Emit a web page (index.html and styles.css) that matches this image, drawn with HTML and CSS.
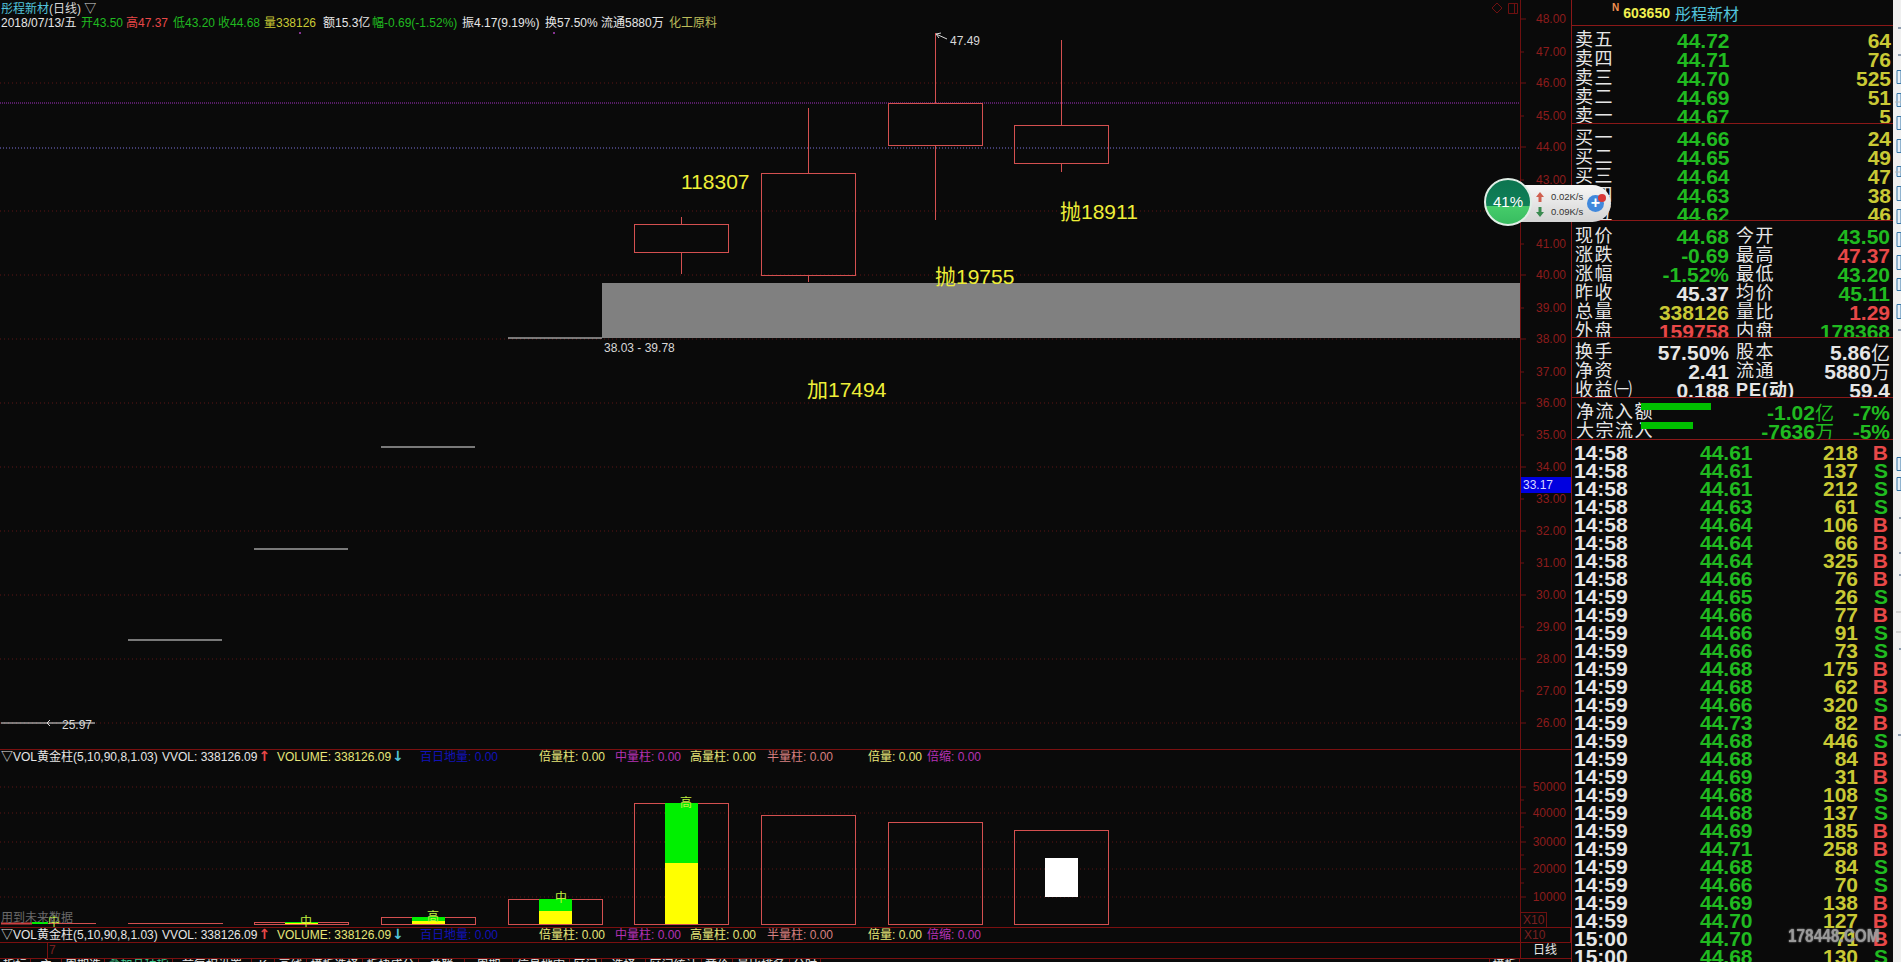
FILE: index.html
```html
<!DOCTYPE html>
<html lang="zh-CN">
<head>
    <meta charset="UTF-8">
    <title>彤程新材(日线)</title>
    <link rel="stylesheet" href="styles.css">
</head>
<body>
<div class="app">
    <section class="chart">
        <div class="pane pane-main">
            <svg class="canvas" viewBox="0 0 1571 749" width="1571" height="749">
                <!-- grid -->
                <path class="grid" d="M0 83H1520M0 211H1520M0 275H1520M0 339H1520M0 403H1520M0 467H1520M0 531H1520M0 595H1520M0 659H1520M0 723H1520"/>
                <path class="line-purple" d="M0 103H1520"/>
                <path class="line-blue" d="M0 148H1520"/>
                <!-- axis -->
                <path class="axis" d="M1520.5 0V749M1520 19h6M1520 52h4M1520 83h6M1520 116h4M1520 147h6M1520 180h4M1520 211h6M1520 244h4M1520 275h6M1520 308h4M1520 339h6M1520 372h4M1520 403h6M1520 435h4M1520 467h6M1520 499h4M1520 531h6M1520 563h4M1520 595h6M1520 627h4M1520 659h6M1520 691h4M1520 723h6"/>
                <g class="axis-label">
                    <text x="1566" y="23">48.00</text>
                    <text x="1566" y="56">47.00</text>
                    <text x="1566" y="87">46.00</text>
                    <text x="1566" y="120">45.00</text>
                    <text x="1566" y="151">44.00</text>
                    <text x="1566" y="184">43.00</text>
                    <text x="1566" y="248">41.00</text>
                    <text x="1566" y="279">40.00</text>
                    <text x="1566" y="312">39.00</text>
                    <text x="1566" y="343">38.00</text>
                    <text x="1566" y="376">37.00</text>
                    <text x="1566" y="407">36.00</text>
                    <text x="1566" y="439">35.00</text>
                    <text x="1566" y="471">34.00</text>
                    <text x="1566" y="503">33.00</text>
                    <text x="1566" y="535">32.00</text>
                    <text x="1566" y="567">31.00</text>
                    <text x="1566" y="599">30.00</text>
                    <text x="1566" y="631">29.00</text>
                    <text x="1566" y="663">28.00</text>
                    <text x="1566" y="695">27.00</text>
                    <text x="1566" y="727">26.00</text>
                </g>
                <rect class="tag" x="1521" y="477" width="50" height="16"/>
                <text class="tag-text" x="1523" y="489">33.17</text>
                <path class="corner" d="M1497 3l5 5-5 5-5-5zM1508.5 3.5h9v10h-9zM1514.5 3.5v10"/>
                <circle class="dot" cx="300" cy="33" r="1"/>
                <circle class="dot" cx="554" cy="33" r="1"/>

                <!-- gray band and old price levels -->
                <rect class="band" x="602" y="283" width="918" height="55"/>
                <path class="level" d="M1 723H95M128 640H222M254 549H348M381 447H475M508 338H602"/>
                <text class="small" x="62" y="729">25.97</text>
                <path class="level-arrow" d="M50 720l-3 3 3 3"/>
                <text class="small" x="604" y="352">38.03 - 39.78</text>

                <!-- candles -->
                <g class="candle">
                    <path d="M681.5 217V224M681.5 252V274"/>
                    <rect x="634.5" y="224.5" width="94" height="28"/>
                    <path d="M808.5 108V173M808.5 276V282"/>
                    <rect x="761.5" y="173.5" width="94" height="102"/>
                    <path d="M935.5 33V103M935.5 146V220"/>
                    <rect x="888.5" y="103.5" width="94" height="42"/>
                    <path d="M1061.5 40V125M1061.5 164V172"/>
                    <rect x="1014.5" y="125.5" width="94" height="38"/>
                </g>
                <path class="level-arrow" d="M947 39l-11-5M936 34l3 4M936 34l5-1"/>
                <text class="small" x="950" y="45">47.49</text>
                <g class="note">
                    <text x="681" y="189">118307</text>
                    <text x="1060" y="219">抛18911</text>
                    <text x="935" y="284">抛19755</text>
                    <text x="807" y="397">加17494</text>
                </g>
            </svg>
            <div class="title"><span class="c-cyan">彤程新材</span>(日线) ▽</div>
            <div class="stats">
                <span>2018/07/13/五</span>
                <span class="c-green">开43.50</span>
                <span class="c-red">高47.37</span>
                <span class="c-green">低43.20</span>
                <span class="c-green">收44.68</span>
                <span class="c-yellow">量338126</span>
                <span>额15.3亿</span>
                <span class="c-green">幅-0.69(-1.52%)</span>
                <span>振4.17(9.19%)</span>
                <span>换57.50%</span>
                <span>流通5880万</span>
                <span class="c-olive">化工原料</span>
            </div>
        </div>

        <div class="pane pane-vol">
            <svg class="canvas" viewBox="0 750 1571 177" width="1571" height="177">
                <path class="grid" d="M0 787H1520M0 813H1520M0 842H1520M0 869H1520M0 897H1520"/>
                <path class="axis" d="M1520.5 750V927M1520 787h6M1520 800h4M1520 813h6M1520 827h4M1520 842h6M1520 855h4M1520 869h6M1520 883h4M1520 897h6"/>
                <g class="axis-label">
                    <text x="1566" y="791">50000</text>
                    <text x="1566" y="817">40000</text>
                    <text x="1566" y="846">30000</text>
                    <text x="1566" y="873">20000</text>
                    <text x="1566" y="901">10000</text>
                </g>
                <rect class="x10" x="1520.5" y="912.5" width="26" height="15"/>
                <text class="x10-text" x="1523" y="924">X10</text>

                <path class="vol-red" d="M1 923.5H32"/>
                <g class="vol">
                    <path d="M32 923.5H96M128 923.5H223"/>
                    <rect x="254.5" y="922.5" width="94" height="2"/>
                    <rect x="381.5" y="917.5" width="94" height="7"/>
                    <rect x="508.5" y="899.5" width="94" height="25"/>
                    <rect x="634.5" y="803.5" width="94" height="121"/>
                    <rect x="761.5" y="815.5" width="94" height="109"/>
                    <rect x="888.5" y="822.5" width="94" height="102"/>
                    <rect x="1014.5" y="830.5" width="94" height="94"/>
                </g>
                <rect class="f-green" x="32" y="922" width="16" height="2"/>
                <rect class="f-green" x="285" y="922" width="33" height="1"/>
                <rect class="f-yellow" x="285" y="923" width="33" height="1"/>
                <rect class="f-green" x="412" y="917" width="33" height="4"/>
                <rect class="f-yellow" x="412" y="921" width="33" height="3"/>
                <rect class="f-green" x="539" y="899" width="33" height="12"/>
                <rect class="f-yellow" x="539" y="911" width="33" height="13"/>
                <rect class="f-green" x="665" y="803" width="33" height="60"/>
                <rect class="f-yellow" x="665" y="863" width="33" height="61"/>
                <rect class="f-white" x="1045" y="858" width="33" height="39"/>
                <g class="mark">
                    <text x="54" y="926">中</text>
                    <text x="306" y="926">中</text>
                    <text x="433" y="921">高</text>
                    <text x="561" y="902">中</text>
                    <text x="686" y="807">高</text>
                </g>
                <text class="future" x="1" y="922">用到未来数据</text>
            </svg>
            <div class="vol-head">
                <span>▽VOL黄金柱(5,10,90,8,1.03)</span>
                <span>VVOL: 338126.09<b class="c-red">↑</b></span>
                <span class="c-pale">VOLUME: 338126.09<b class="c-cyan">↓</b></span>
                <span class="c-blue">百日地量: 0.00</span>
                <span class="c-pale">倍量柱: 0.00</span>
                <span class="c-magenta">中量柱: 0.00</span>
                <span class="c-pale">高量柱: 0.00</span>
                <span class="c-salmon">半量柱: 0.00</span>
                <span class="c-pale">倍量: 0.00</span>
                <span class="c-magenta">倍缩: 0.00</span>
            </div>
        </div>

        <div class="pane pane-vol2">
            <div class="vol-head">
                <span>▽VOL黄金柱(5,10,90,8,1.03)</span>
                <span>VVOL: 338126.09<b class="c-red">↑</b></span>
                <span class="c-pale">VOLUME: 338126.09<b class="c-cyan">↓</b></span>
                <span class="c-blue">百日地量: 0.00</span>
                <span class="c-pale">倍量柱: 0.00</span>
                <span class="c-magenta">中量柱: 0.00</span>
                <span class="c-pale">高量柱: 0.00</span>
                <span class="c-salmon">半量柱: 0.00</span>
                <span class="c-pale">倍量: 0.00</span>
                <span class="c-magenta">倍缩: 0.00</span>
            </div>
            <div class="x10-box">X10</div>
        </div>

        <div class="pane pane-date">
            <div class="month">7</div>
            <div class="period">日线</div>
        </div>

        <div class="tabs">
            <span>指标</span><span>主</span><span>周期选</span><span class="c-tab">叠加品种指</span><span>前复权设置</span><span>K</span><span>画线</span><span>模板选择</span><span>板块成分</span><span>关联</span><span>周期</span><span>信息地雷</span><span>区间</span><span>选择</span><span>区间统计</span><span>竞价</span><span>量比排名</span><span>分时</span><span class="tab-gap"></span><span>模板</span>
        </div>
    </section>

    <aside class="quote">
        <header class="q-head">
            <sup>N</sup><strong>603650</strong><em>彤程新材</em>
        </header>

        <div class="book book-sell">
            <div class="b-row"><label>卖五</label><span class="c-green">44.72</span><span class="c-yellow">64</span></div>
            <div class="b-row"><label>卖四</label><span class="c-green">44.71</span><span class="c-yellow">76</span></div>
            <div class="b-row"><label>卖三</label><span class="c-green">44.70</span><span class="c-yellow">525</span></div>
            <div class="b-row"><label>卖二</label><span class="c-green">44.69</span><span class="c-yellow">51</span></div>
            <div class="b-row"><label>卖一</label><span class="c-green">44.67</span><span class="c-yellow">5</span></div>
        </div>
        <div class="book book-buy">
            <div class="b-row"><label>买一</label><span class="c-green">44.66</span><span class="c-yellow">24</span></div>
            <div class="b-row"><label>买二</label><span class="c-green">44.65</span><span class="c-yellow">49</span></div>
            <div class="b-row"><label>买三</label><span class="c-green">44.64</span><span class="c-yellow">47</span></div>
            <div class="b-row"><label>买四</label><span class="c-green">44.63</span><span class="c-yellow">38</span></div>
            <div class="b-row"><label>买五</label><span class="c-green">44.62</span><span class="c-yellow">46</span></div>
        </div>

        <div class="detail detail-a">
            <label>现价</label><span class="c-green">44.68</span><label>今开</label><span class="c-green">43.50</span>
            <label>涨跌</label><span class="c-green">-0.69</span><label>最高</label><span class="c-red">47.37</span>
            <label>涨幅</label><span class="c-green">-1.52%</span><label>最低</label><span class="c-green">43.20</span>
            <label>昨收</label><span>45.37</span><label>均价</label><span class="c-green">45.11</span>
            <label>总量</label><span class="c-yellow">338126</span><label>量比</label><span class="c-red">1.29</span>
            <label>外盘</label><span class="c-red">159758</span><label>内盘</label><span class="c-green">178368</span>
        </div>
        <div class="detail detail-b">
            <label>换手</label><span>57.50%</span><label>股本</label><span>5.86<i class="unit">亿</i></span>
            <label>净资</label><span>2.41</span><label>流通</label><span>5880<i class="unit">万</i></span>
            <label>收益㈠</label><span>0.188</span><label class="pe">PE(动)</label><span>59.4</span>
        </div>
        <div class="flow">
            <div class="f-row"><label>净流入额</label><i class="f-bar f-bar-a"></i><span class="c-green f-val">-1.02<i class="unit">亿</i></span><span class="c-green f-pct">-7%</span></div>
            <div class="f-row"><label>大宗流入</label><i class="f-bar f-bar-b"></i><span class="c-green f-val">-7636<i class="unit">万</i></span><span class="c-green f-pct">-5%</span></div>
        </div>

        <div class="trades">
            <div class="t-row"><span>14:58</span><span class="c-green">44.61</span><span class="c-yellow">218</span><span class="c-red">B</span></div>
            <div class="t-row"><span>14:58</span><span class="c-green">44.61</span><span class="c-yellow">137</span><span class="c-green">S</span></div>
            <div class="t-row"><span>14:58</span><span class="c-green">44.61</span><span class="c-yellow">212</span><span class="c-green">S</span></div>
            <div class="t-row"><span>14:58</span><span class="c-green">44.63</span><span class="c-yellow">61</span><span class="c-green">S</span></div>
            <div class="t-row"><span>14:58</span><span class="c-green">44.64</span><span class="c-yellow">106</span><span class="c-red">B</span></div>
            <div class="t-row"><span>14:58</span><span class="c-green">44.64</span><span class="c-yellow">66</span><span class="c-red">B</span></div>
            <div class="t-row"><span>14:58</span><span class="c-green">44.64</span><span class="c-yellow">325</span><span class="c-red">B</span></div>
            <div class="t-row"><span>14:58</span><span class="c-green">44.66</span><span class="c-yellow">76</span><span class="c-red">B</span></div>
            <div class="t-row"><span>14:59</span><span class="c-green">44.65</span><span class="c-yellow">26</span><span class="c-green">S</span></div>
            <div class="t-row"><span>14:59</span><span class="c-green">44.66</span><span class="c-yellow">77</span><span class="c-red">B</span></div>
            <div class="t-row"><span>14:59</span><span class="c-green">44.66</span><span class="c-yellow">91</span><span class="c-green">S</span></div>
            <div class="t-row"><span>14:59</span><span class="c-green">44.66</span><span class="c-yellow">73</span><span class="c-green">S</span></div>
            <div class="t-row"><span>14:59</span><span class="c-green">44.68</span><span class="c-yellow">175</span><span class="c-red">B</span></div>
            <div class="t-row"><span>14:59</span><span class="c-green">44.68</span><span class="c-yellow">62</span><span class="c-red">B</span></div>
            <div class="t-row"><span>14:59</span><span class="c-green">44.66</span><span class="c-yellow">320</span><span class="c-green">S</span></div>
            <div class="t-row"><span>14:59</span><span class="c-green">44.73</span><span class="c-yellow">82</span><span class="c-red">B</span></div>
            <div class="t-row"><span>14:59</span><span class="c-green">44.68</span><span class="c-yellow">446</span><span class="c-green">S</span></div>
            <div class="t-row"><span>14:59</span><span class="c-green">44.68</span><span class="c-yellow">84</span><span class="c-red">B</span></div>
            <div class="t-row"><span>14:59</span><span class="c-green">44.69</span><span class="c-yellow">31</span><span class="c-red">B</span></div>
            <div class="t-row"><span>14:59</span><span class="c-green">44.68</span><span class="c-yellow">108</span><span class="c-green">S</span></div>
            <div class="t-row"><span>14:59</span><span class="c-green">44.68</span><span class="c-yellow">137</span><span class="c-green">S</span></div>
            <div class="t-row"><span>14:59</span><span class="c-green">44.69</span><span class="c-yellow">185</span><span class="c-red">B</span></div>
            <div class="t-row"><span>14:59</span><span class="c-green">44.71</span><span class="c-yellow">258</span><span class="c-red">B</span></div>
            <div class="t-row"><span>14:59</span><span class="c-green">44.68</span><span class="c-yellow">84</span><span class="c-green">S</span></div>
            <div class="t-row"><span>14:59</span><span class="c-green">44.66</span><span class="c-yellow">70</span><span class="c-green">S</span></div>
            <div class="t-row"><span>14:59</span><span class="c-green">44.69</span><span class="c-yellow">138</span><span class="c-red">B</span></div>
            <div class="t-row"><span>14:59</span><span class="c-green">44.70</span><span class="c-yellow">127</span><span class="c-red">B</span></div>
            <div class="t-row"><span>15:00</span><span class="c-green">44.70</span><span class="c-yellow">71</span><span class="c-red">B</span></div>
            <div class="t-row"><span>15:00</span><span class="c-green">44.68</span><span class="c-yellow">130</span><span class="c-green">S</span></div>
        </div>
        <div class="watermark">178448.COM</div>
    </aside>

    <aside class="side">
        <svg viewBox="0 0 8 962" width="8" height="962">
            <g class="side-ico">
                <path d="M4 70.5h4v13H4zM4 93.5h4v13H4zM4 116.5h4v13H4zM4 139.5h4v13H4zM4 166.5h4v10H4zM4 186.5h4v14H4zM4 209.5h4v14H4zM4 232.5h4v14H4zM4 255.5h4v14H4zM4 278.5h4v12H4zM4 304.5h4v14H4zM4 457.5h4v13H4zM4 477.5h4v13H4z"/>
            </g>
            <path class="side-dark" d="M5 28h3M5 55h3M5 330h3M6 518h2M6 553h2M6 575h2M6 649h2M5 735h3"/>
            <path class="side-sep" d="M2 102H8M2 172H8M3 612H8M3 632H8"/>
        </svg>
    </aside>

    <!-- floating net speed widget -->
    <div class="speed">
        <div class="speed-pill">
            <div class="speed-line">
                <svg class="up" width="8" height="10" viewBox="0 0 8 10"><path d="M4 0l4 5H5.5v5h-3V5H0z"/></svg>
                <span>0.02K/s</span>
            </div>
            <div class="speed-line">
                <svg class="down" width="8" height="10" viewBox="0 0 8 10"><path d="M4 10L0 5h2.5V0h3v5H8z"/></svg>
                <span>0.09K/s</span>
            </div>
            <div class="plus">+</div>
            <i class="plus-dot"></i>
        </div>
        <div class="speed-ball">41%</div>
    </div>
</div>
</body>
</html>
```

FILE: styles.css
```css
*{
    box-sizing: border-box;
}
html, body{
    margin: 0;
    height: 100%;
    overflow: hidden;
    background-color: #0a0a0a;
}
body{
    font-family: "Liberation Sans", "Noto Sans CJK SC", sans-serif;
    font-size: 12px;
    color: #e6e6e6;
}
.app{
    display: flex;
    position: relative;
    width: 1901px;
    height: 962px;
    overflow: hidden;
}

/* colours */
.c-green{ color: #20ba20; }
.c-red{ color: #e84848; }
.c-yellow{ color: #c9c935; }
.c-olive{ color: #bcbc5a; }
.c-cyan{ color: #52c4dc; }
.c-pale{ color: #e6e67a; }
.c-blue{ color: #1212b8; }
.c-magenta{ color: #b432b4; }
.c-salmon{ color: #d88080; }

/* chart side */
.chart{
    width: 1571px;
    flex: none;
    display: flex;
    flex-direction: column;
}
.pane{
    position: relative;
    border-bottom: 1px solid #7a1010;
}
.pane-main{
    height: 750px;
    padding: 2px 0 0 1px;
}
.pane-vol{
    height: 178px;
}
.pane-vol2{
    height: 15px;
}
.pane-date{
    height: 16px;
}
.canvas{
    position: absolute;
    top: 0;
    left: 0;
    display: block;
}
.canvas text{
    font-family: "Liberation Sans", "Noto Sans CJK SC", sans-serif;
}
.title, .stats, .vol-head{
    position: relative;
}
.title{
    height: 14px;
    line-height: 14px;
    color: #d8d8d8;
}
.stats{
    display: grid;
    grid-template-columns: 80px 45px 47px 45px 46px 59px 49px 90px 83px 56px 68px auto;
    height: 15px;
    line-height: 15px;
    white-space: nowrap;
}

.grid{
    fill: none;
    stroke: #5c1414;
    stroke-dasharray: 1 3;
}
.line-purple{
    stroke: #a030c0;
    stroke-dasharray: 1 1;
}
.line-blue{
    stroke: #7a70d8;
    stroke-dasharray: 1 2;
}
.axis{
    fill: none;
    stroke: #6e1010;
}
.axis-label text{
    fill: #8c1c1c;
    font-size: 12px;
    text-anchor: end;
}
.tag{
    fill: #0000e0;
}
.tag-text{
    fill: #d8d8ff;
    font-size: 12px;
}
.corner{
    fill: none;
    stroke: #6e1010;
}
.dot{
    fill: #b040c0;
}
.band{
    fill: #808080;
}
.level{
    fill: none;
    stroke: #e8e8e8;
}
.level-arrow{
    fill: none;
    stroke: #d8d8d8;
}
.small{
    fill: #d8d8d8;
    font-size: 12px;
}
.candle path, .candle rect, .vol path, .vol rect{
    fill: none;
    stroke: #d45050;
}
.note text{
    fill: #eeee38;
    font-size: 21px;
}
.vol-red{
    stroke: #d04040;
    stroke-width: 2;
}
.f-green{ fill: #00f000; }
.f-yellow{ fill: #ffff00; }
.f-white{ fill: #ffffff; }
.mark text{
    fill: #c0f040;
    font-size: 12px;
    text-anchor: middle;
}
.future{
    fill: #6a6a6a;
    font-size: 12px;
}
.x10{
    fill: none;
    stroke: #6e1010;
}
.x10-text{
    fill: #7a2020;
    font-size: 12px;
}

/* indicator header, same columns in both panes */
.vol-head{
    display: grid;
    grid-template-columns: 161px 115px 143px 119px 76px 75px 77px 101px 59px auto;
    padding-left: 1px;
    height: 15px;
    line-height: 15px;
    white-space: nowrap;
}
.vol-head b{
    font-family: "DejaVu Sans", sans-serif;
    font-size: 14px;
    font-weight: 700;
    line-height: 0;
    margin-left: 1px;
}
.pane-vol2 .vol-head{
    width: 1520px;
    height: 14px;
    line-height: 14px;
}
.x10-box{
    position: absolute;
    top: -1px;
    left: 1520px;
    width: 51px;
    height: 16px;
    border: 1px solid #7a1010;
    color: #7a2020;
    line-height: 14px;
    padding-left: 3px;
}
.month{
    width: 48px;
    height: 15px;
    border-right: 1px solid #7a1010;
    color: #7a2020;
    line-height: 15px;
    text-indent: 49px;
    white-space: nowrap;
}
.period{
    position: absolute;
    left: 1520px;
    top: 0;
    height: 15px;
    padding-left: 12px;
    border-left: 1px solid #7a1010;
    line-height: 15px;
    color: #e8e8e8;
}
.tabs{
    display: grid;
    grid-template-columns: 31px 31px 43px 68px 79px 23px 32px 56px 56px 46px 48px 57px 32px 44px 56px 31px 57px 31px 669px 30px;
    height: 3px;
    overflow: hidden;
    line-height: 12px;
    white-space: nowrap;
}
.tabs span{
    overflow: hidden;
    text-align: center;
    border-right: 1px solid #7a1010;
}
.tabs .c-tab{
    color: #40c890;
}

/* quote panel */
.quote{
    position: relative;
    width: 322px;
    flex: none;
    border-left: 1px solid #8a1818;
    font-weight: 700;
    font-size: 21px;
}
.quote label{
    font-weight: 400;
    font-size: 18px;
    letter-spacing: 1.5px;
    white-space: nowrap;
}
.unit{
    font-style: normal;
    font-weight: 400;
    font-size: 19px;
}
.q-head{
    height: 26px;
    border-bottom: 1px solid #8a1818;
    display: flex;
    align-items: center;
    padding-left: 40px;
}
.q-head sup{
    font-size: 10px;
    color: #f09050;
    line-height: 10px;
    margin: -9px 4px 0 0;
}
.q-head strong{
    font-size: 14px;
    color: #f0f050;
}
.q-head em{
    font-style: normal;
    font-weight: 400;
    font-size: 16px;
    color: #52c4dc;
    margin-left: 5px;
}
.book{
    overflow: hidden;
    border-bottom: 1px solid #8a1818;
}
.book-sell{
    height: 98px;
    padding-top: 5px;
}
.book-buy{
    height: 97px;
    padding-top: 5px;
}
.b-row{
    display: grid;
    grid-template-columns: 102px 53px 161px;
    padding-left: 3px;
    height: 19px;
    line-height: 19px;
}
.b-row span:last-child{
    text-align: right;
}
.detail{
    display: grid;
    grid-template-columns: 52px 102px 54px 107px;
    padding-left: 3px;
    grid-auto-rows: 19px;
    line-height: 19px;
    overflow: hidden;
    border-bottom: 1px solid #8a1818;
}
.detail span{
    text-align: right;
    white-space: nowrap;
}
.detail label:nth-of-type(even){
    padding-left: 7px;
}
.detail-a{
    height: 117px;
    padding-top: 6px;
}
.detail-b{
    height: 60px;
    padding-top: 5px;
}
.detail-b .pe{
    font-weight: 700;
    letter-spacing: 1px;
}
.flow{
    height: 42px;
    padding-top: 5px;
    border-bottom: 1px solid #8a1818;
    overflow: hidden;
}
.f-row{
    position: relative;
    display: grid;
    grid-template-columns: 140px 118px 56px;
    padding-left: 4px;
    height: 19px;
    line-height: 19px;
}
.f-val, .f-pct{
    text-align: right;
    white-space: nowrap;
}
.f-bar{
    position: absolute;
    left: 69px;
    top: 0;
    height: 7px;
    background-color: #00c000;
}
.f-bar-a{ width: 70px; }
.f-bar-b{ width: 52px; }
.trades{
    height: 523px;
    padding-top: 4px;
    overflow: hidden;
}
.t-row{
    display: grid;
    grid-template-columns: 126px 105px 53px 30px;
    padding-left: 2px;
    height: 18px;
    line-height: 18px;
}
.t-row span:nth-child(3), .t-row span:nth-child(4){
    text-align: right;
}
.watermark{
    position: absolute;
    left: 216px;
    top: 925px;
    font-size: 19px;
    color: #9a9a9a;
    white-space: nowrap;
    text-shadow: 0 0 2px #b0b0b0;
    transform: scaleX(.81);
    transform-origin: left center;
    filter: blur(.6px);
}

/* cut off tool strip */
.side{
    width: 8px;
    flex: none;
    background-color: #f0f0f0;
}
.side svg{
    display: block;
}
.side-ico{
    fill: #e8f0f8;
    stroke: #3a78a8;
}
.side-dark{
    stroke: #2a4a70;
}
.side-sep{
    stroke: #b8b8b8;
}

/* net speed widget, lies over the chart */
.speed{
    position: absolute;
    left: 1484px;
    top: 178px;
    width: 128px;
    height: 48px;
}
.speed-pill{
    position: absolute;
    left: 24px;
    top: 7px;
    width: 103px;
    height: 37px;
    padding: 4px 0 0 28px;
    border-radius: 0 19px 19px 0;
    background: linear-gradient(#f6f6f6, #d4d4d4);
    color: #333;
    font-weight: 400;
}
.speed-line{
    display: flex;
    align-items: center;
    gap: 7px;
    height: 15px;
    font-size: 9.5px;
}
.up{ fill: #d06050; }
.down{ fill: #3a8a50; }
.plus{
    position: absolute;
    right: 7px;
    top: 10px;
    width: 17px;
    height: 17px;
    border-radius: 50%;
    background-color: #4088dc;
    color: #fff;
    font-size: 16px;
    font-weight: 700;
    line-height: 16px;
    text-align: center;
}
.plus-dot{
    position: absolute;
    right: 5px;
    top: 9px;
    width: 8px;
    height: 8px;
    border-radius: 50%;
    background-color: #d83838;
}
.speed-ball{
    position: absolute;
    left: 0;
    top: 0;
    width: 48px;
    height: 48px;
    border: 2px solid #e0eee6;
    border-radius: 50%;
    background: linear-gradient(#0c7550 0, #108058 60%, #45cc6a 60%, #38bc60 100%);
    color: #fff;
    font-size: 15px;
    line-height: 44px;
    text-align: center;
}
```
